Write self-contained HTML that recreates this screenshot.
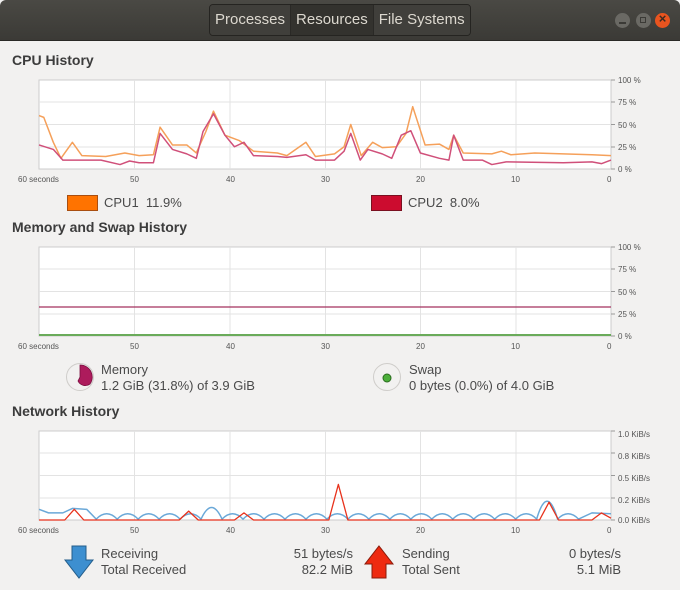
<!DOCTYPE html>
<html><head><meta charset="utf-8"><style>
body{margin:0;width:680px;height:590px;background:#f2f1f0;font-family:"Liberation Sans","DejaVu Sans",sans-serif;overflow:hidden;position:relative;color:#3c3c3c}
.hdr{position:absolute;left:0;top:0;width:680px;height:40px;background:linear-gradient(#4a4944,#3b3a36);border-radius:6px 6px 0 0;border-bottom:1px solid #2a2926}
.tabs{position:absolute;left:209px;top:4px;height:30px;display:flex;border:1px solid #252421;border-radius:4px;overflow:hidden}
.tabs div{color:#dcd8cf;font-size:15px;line-height:30px;padding:0 5px;background:#403f3b;border-right:1px solid #2a2926}
.tabs div.a{background:#33322e}
.tabs div:last-child{border-right:none}
.wb{position:absolute;top:13px;width:15px;height:15px;border-radius:50%;background:#6a6964}
.t{position:absolute;font-weight:bold;font-size:14px;color:#3c3c3c}
.s{position:absolute;font-size:13px;color:#4a4a4a;line-height:16px}
svg{position:absolute;left:0;top:0}
.ax{font-size:8px;fill:#555;font-family:"Liberation Sans",sans-serif}
</style></head><body>
<div class="hdr">
<div class="tabs"><div>Processes</div><div class="a">Resources</div><div>File Systems</div></div>
<div class="wb" style="left:615px"></div><div class="wb" style="left:636px"></div>
<div class="wb" style="left:655px;background:#e9541f"></div>
<div style="position:absolute;left:619px;top:22px;width:7px;height:2px;background:#3b3a36"></div>
<div style="position:absolute;left:640px;top:17px;width:4px;height:4px;border:1.5px solid #3b3a36"></div>
<div style="position:absolute;left:655px;top:11px;width:15px;text-align:center;font-size:13px;font-weight:bold;color:#3b2a20">×</div>
</div>
<div class="t" style="left:12px;top:52px">CPU History</div>
<div class="t" style="left:12px;top:219px">Memory and Swap History</div>
<div class="t" style="left:12px;top:403px">Network History</div>

<svg width="680" height="590">
<defs>
<g id="grid">
<rect x="39" y="0" width="572" height="89" fill="#fff" stroke="#ccc" stroke-width="1"/>
<g stroke="#e3e3e3" stroke-width="1">
<line x1="39" y1="22" x2="611" y2="22"/><line x1="39" y1="44.5" x2="611" y2="44.5"/><line x1="39" y1="67" x2="611" y2="67"/>
<line x1="134.5" y1="0" x2="134.5" y2="89"/><line x1="230" y1="0" x2="230" y2="89"/><line x1="325.5" y1="0" x2="325.5" y2="89"/><line x1="420.5" y1="0" x2="420.5" y2="89"/><line x1="516" y1="0" x2="516" y2="89"/>
</g>
<g stroke="#999"><line x1="611" y1="0" x2="615" y2="0"/><line x1="611" y1="22" x2="615" y2="22"/><line x1="611" y1="44.5" x2="615" y2="44.5"/><line x1="611" y1="67" x2="615" y2="67"/><line x1="611" y1="89" x2="615" y2="89"/></g>
<g class="ax"><text x="18" y="102">60 seconds</text><text x="130" y="102">50</text><text x="226" y="102">40</text><text x="321" y="102">30</text><text x="416" y="102">20</text><text x="511" y="102">10</text><text x="607" y="102">0</text></g>
</g>
</defs>
<g transform="translate(0,80)"><use href="#grid"/>
<g class="ax"><text x="618" y="3">100 %</text><text x="618" y="25">75 %</text><text x="618" y="48">50 %</text><text x="618" y="70">25 %</text><text x="618" y="92">0 %</text></g></g>
<g transform="translate(0,247)"><use href="#grid"/>
<g class="ax"><text x="618" y="3">100 %</text><text x="618" y="25">75 %</text><text x="618" y="48">50 %</text><text x="618" y="70">25 %</text><text x="618" y="92">0 %</text></g>
<line x1="39" y1="60" x2="611" y2="60" stroke="#a3305e" stroke-width="1.2"/>
<line x1="39" y1="88" x2="611" y2="88" stroke="#6aab5a" stroke-width="2"/></g>
<g transform="translate(0,431)"><use href="#grid"/>
<g class="ax"><text x="618" y="6">1.0 KiB/s</text><text x="618" y="28">0.8 KiB/s</text><text x="618" y="50">0.5 KiB/s</text><text x="618" y="72">0.2 KiB/s</text><text x="618" y="92">0.0 KiB/s</text></g></g>

<g transform="translate(611,169) scale(-9.533,-0.89)" fill="none" stroke-linejoin="round">
<polyline vector-effect="non-scaling-stroke" stroke="#f5a05a" stroke-width="1.5" points="60,60 59.5,58 58.5,30 57.7,12 56.5,30 55.5,15 53,14 51,18 49.5,15 48,16 47.3,47 46,27 44.5,27 43.5,18 42.5,42 41.7,65 40.5,38 39,32 37.5,20 35,18 34,15 32,30 31,14 29,17 28,25 27.3,50 26.2,15 25,30 24,24 22.5,25 21.5,40 20.8,70 19.5,27 18,28 17,22 16.5,38 15.5,18 12.5,17 11.5,20 10.5,16 8,18 5,17 2,16 0,15"/>
<polyline vector-effect="non-scaling-stroke" stroke="#d0507a" stroke-width="1.5" points="60,27 58.5,22 57.5,10 55,10 53.5,10 51.5,5 50.5,9 49.5,7 48,7 47.3,40 46,22 44.5,17 43.5,12 42.8,42 41.7,62 40.5,38 39.5,25 38.5,30 37.5,15 35,14 34,13 32,16 31,10 29,10 28,20 27.3,40 26.3,10 25.5,22 24,17 23,12 22,38 21,43 20,18 18,12 17,10 16.5,38 15.5,10 13.5,10 12.5,5 11,8 5,7 2,8 1,6 0,10"/>
</g>
<g transform="translate(611,520) scale(-9.533,-0.89)" fill="none" stroke-linejoin="round">
<path vector-effect="non-scaling-stroke" stroke="#6aa8d8" stroke-width="1.5" d="M60,12 L59,8 L57.5,8 L56.5,13 L55,12 L54,1 q-1.1,12 -2.2,0 q-1.1,12 -2.2,0 q-1.1,12 -2.2,0 q-1.1,12 -2.2,0 q-1.1,12 -2.2,0 q-1.1,26 -2.2,0 q-1.1,12 -2.2,0 q-1.1,12 -2.2,0 q-1.1,12 -2.2,0 q-1.1,12 -2.2,0 q-1.1,12 -2.2,0 q-1.1,12 -2.2,0 q-1.1,12 -2.2,0 q-1.1,12 -2.2,0 q-1.1,12 -2.2,0 q-1.1,12 -2.2,0 q-1.1,12 -2.2,0 q-1.1,12 -2.2,0 q-1.1,12 -2.2,0 q-1.1,12 -2.2,0 q-1.1,12 -2.2,0 q-1.1,40 -2.2,0 q-1.1,12 -2.2,0 L2,8 L0,7"/>
<polyline vector-effect="non-scaling-stroke" stroke="#e8321c" stroke-width="1.3" points="60,0 57.3,0 56.3,12 55.3,0 45.3,0 44.3,10 43.3,0 39.5,0 38.5,8 37.5,0 29.6,0 28.6,40 27.6,0 7.5,0 6.5,20 5.5,0 2,0 1,8 0,2"/>
</g>

<rect x="67.5" y="195.5" width="30" height="15" fill="#ff7300" stroke="#a94e10"/>
<rect x="371.5" y="195.5" width="30" height="15" fill="#cc0c2f" stroke="#7a1020"/>

<circle cx="80" cy="377" r="13.5" fill="#f2f1f0" stroke="#cfcdca"/>
<path d="M80,377 L80,365 A12,12 0 0 1 90,384 A8,8 0 0 1 78,381 Z" fill="#ad1b5c" stroke="#7a1040" stroke-width="0.8"/>
<circle cx="387" cy="377" r="13.5" fill="#f2f1f0" stroke="#cfcdca"/>
<circle cx="387" cy="378" r="4" fill="#4caf3a" stroke="#2a6b1e"/>

<path d="M72,546 H86 V560 H93 L79,578 L65,560 H72 Z" fill="#3d8fd0" stroke="#245d8a"/>
<path d="M379,546 L393,564 H386 V578 H372 V564 H365 Z" fill="#ee2a10" stroke="#8a1a0a"/>
</svg>

<div class="s" style="left:104px;top:195px">CPU1&nbsp; 11.9%</div>
<div class="s" style="left:408px;top:195px">CPU2&nbsp; 8.0%</div>
<div class="s" style="left:101px;top:362px">Memory<br>1.2 GiB (31.8%) of 3.9 GiB</div>
<div class="s" style="left:409px;top:362px">Swap<br>0 bytes (0.0%) of 4.0 GiB</div>
<div class="s" style="left:101px;top:546px">Receiving<br>Total Received</div>
<div class="s" style="left:200px;top:546px;width:153px;text-align:right">51 bytes/s<br>82.2 MiB</div>
<div class="s" style="left:402px;top:546px">Sending<br>Total Sent</div>
<div class="s" style="left:500px;top:546px;width:121px;text-align:right">0 bytes/s<br>5.1 MiB</div>
</body></html>
